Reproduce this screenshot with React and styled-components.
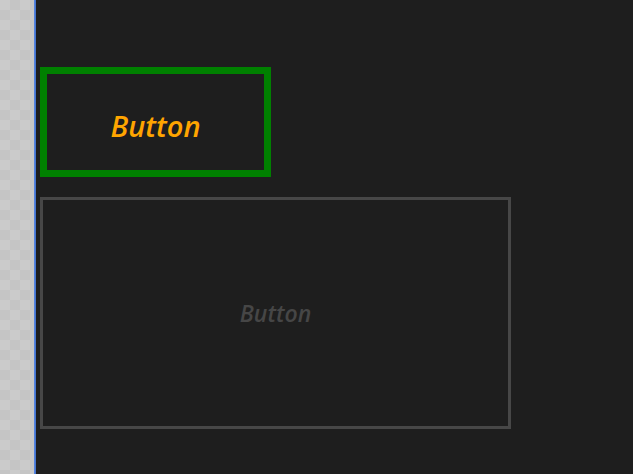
import React from 'react';
import styled, {createGlobalStyle} from 'styled-components';

const GlobalStyle = createGlobalStyle`
    html, body {
        margin: 0;
        padding: 0;
        height: 100%;
        background: #1e1e1e;
        font-family: "Open Sans", "Noto Sans", sans-serif;
    }
    #root {
        height: 100%;
    }
`

function App() {
    return (
        <>
            <GlobalStyle />
            <Page>
                <Checker />
                <Divider />
                <Canvas>
                    <StyledButton border="#008000" color="#ffa500" size={29} weight={600} width={231} height={110} thick={7} shift={6}>
                        Button
                    </StyledButton>
                    <StyledButton border="#474747" color="#464646" size={23} weight={600} width={471} height={232} thick={3} shift={0}>
                        Button
                    </StyledButton>
                </Canvas>
            </Page>
        </>
    )
}

const Page = styled.div`
    display: flex;
    height: 474px;
    overflow: hidden;
`

const Checker = styled.div`
    width: 34px;
    flex-shrink: 0;
    background-color: #cbcbcb;
    background-image:
        linear-gradient(45deg, #c5c5c5 25%, transparent 25%, transparent 75%, #c5c5c5 75%),
        linear-gradient(45deg, #c5c5c5 25%, transparent 25%, transparent 75%, #c5c5c5 75%);
    background-size: 20px 20px;
    background-position: 0 0, 10px 10px;
`

const Divider = styled.div`
    width: 2px;
    flex-shrink: 0;
    background: linear-gradient(90deg, #5b8ae6, #3f6fc8);
`

const Canvas = styled.div`
    flex: 1;
    display: flex;
    flex-direction: column;
    align-items: flex-start;
    gap: 20px;
    padding: 67px 0 0 4px;
    background: #1e1e1e;
`

const StyledButton = styled.div`
    box-sizing: border-box;
    width: ${p => p.width}px;
    height: ${p => p.height}px;
    border: ${p => p.thick}px solid ${p => p.border};
    padding-top: ${p => p.shift}px;
    display: flex;
    align-items: center;
    justify-content: center;
    color: ${p => p.color};
    font-size: ${p => p.size}px;
    font-weight: ${p => p.weight};
    font-style: italic;
    line-height: 1;
`

export default App
